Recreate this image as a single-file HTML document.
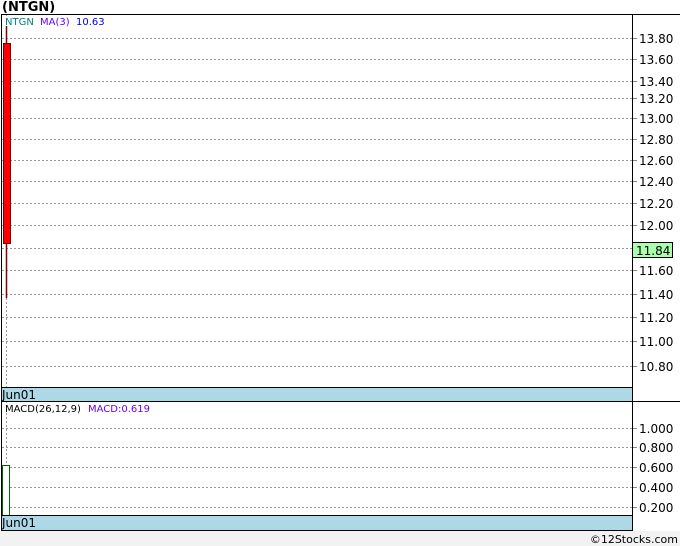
<!DOCTYPE html>
<html><head><meta charset="utf-8"><style>
body{margin:0;width:680px;height:546px;background:#f2f2f2;overflow:hidden}
svg{display:block}
text{font-family:"DejaVu Sans","Liberation Sans",sans-serif}
</style></head><body>
<svg width="680" height="546" xmlns="http://www.w3.org/2000/svg">
<rect x="0" y="0" width="680" height="531" fill="#fff"/>
<rect x="0" y="0" width="680" height="14" fill="#fff"/>
<text x="2" y="11" font-size="13" font-weight="bold" fill="#000">(NTGN)</text>
<g stroke="#999" stroke-dasharray="2,2" stroke-width="1">
<line x1="2" x2="632" y1="38.5" y2="38.5"/><line x1="2" x2="632" y1="59.5" y2="59.5"/><line x1="2" x2="632" y1="81.5" y2="81.5"/><line x1="2" x2="632" y1="98.5" y2="98.5"/><line x1="2" x2="632" y1="118.5" y2="118.5"/><line x1="2" x2="632" y1="139.5" y2="139.5"/><line x1="2" x2="632" y1="160.5" y2="160.5"/><line x1="2" x2="632" y1="181.5" y2="181.5"/><line x1="2" x2="632" y1="203.5" y2="203.5"/><line x1="2" x2="632" y1="225.5" y2="225.5"/><line x1="2" x2="632" y1="248.5" y2="248.5"/><line x1="2" x2="632" y1="270.5" y2="270.5"/><line x1="2" x2="632" y1="294.5" y2="294.5"/><line x1="2" x2="632" y1="317.5" y2="317.5"/><line x1="2" x2="632" y1="341.5" y2="341.5"/><line x1="2" x2="632" y1="366.5" y2="366.5"/>
<line x1="2" x2="632" y1="428.5" y2="428.5"/><line x1="2" x2="632" y1="447.5" y2="447.5"/><line x1="2" x2="632" y1="467.5" y2="467.5"/><line x1="2" x2="632" y1="487.5" y2="487.5"/><line x1="2" x2="632" y1="507.5" y2="507.5"/>
<line x1="6.5" x2="6.5" y1="14" y2="387"/><line x1="6.5" x2="6.5" y1="401" y2="515"/>
</g>
<g stroke="#888"><line x1="632" x2="637" y1="38.5" y2="38.5"/><line x1="632" x2="637" y1="59.5" y2="59.5"/><line x1="632" x2="637" y1="81.5" y2="81.5"/><line x1="632" x2="637" y1="98.5" y2="98.5"/><line x1="632" x2="637" y1="118.5" y2="118.5"/><line x1="632" x2="637" y1="139.5" y2="139.5"/><line x1="632" x2="637" y1="160.5" y2="160.5"/><line x1="632" x2="637" y1="181.5" y2="181.5"/><line x1="632" x2="637" y1="203.5" y2="203.5"/><line x1="632" x2="637" y1="225.5" y2="225.5"/><line x1="632" x2="637" y1="270.5" y2="270.5"/><line x1="632" x2="637" y1="294.5" y2="294.5"/><line x1="632" x2="637" y1="317.5" y2="317.5"/><line x1="632" x2="637" y1="341.5" y2="341.5"/><line x1="632" x2="637" y1="366.5" y2="366.5"/><line x1="632" x2="637" y1="428.5" y2="428.5"/><line x1="632" x2="637" y1="447.5" y2="447.5"/><line x1="632" x2="637" y1="467.5" y2="467.5"/><line x1="632" x2="637" y1="487.5" y2="487.5"/><line x1="632" x2="637" y1="507.5" y2="507.5"/></g>
<g font-size="12" fill="#000">
<text x="639" y="43">13.80</text><text x="639" y="64">13.60</text><text x="639" y="86">13.40</text><text x="639" y="103">13.20</text><text x="639" y="123">13.00</text><text x="639" y="144">12.80</text><text x="639" y="165">12.60</text><text x="639" y="186">12.40</text><text x="639" y="208">12.20</text><text x="639" y="230">12.00</text><text x="639" y="275">11.60</text><text x="639" y="299">11.40</text><text x="639" y="322">11.20</text><text x="639" y="346">11.00</text><text x="639" y="371">10.80</text>
<text x="639" y="433">1.000</text><text x="639" y="452">0.800</text><text x="639" y="472">0.600</text><text x="639" y="492">0.400</text><text x="639" y="512">0.200</text>
</g>
<rect x="632.5" y="242.5" width="40" height="15" fill="#aaffaa" stroke="#000"/>
<text x="636" y="255" font-size="12">11.84</text>
<line x1="6.5" x2="6.5" y1="26" y2="298" stroke="#800000" stroke-width="1.5"/>
<rect x="3.5" y="43.5" width="7" height="200" fill="#ff0000" stroke="#800000"/>
<rect x="2.5" y="465.5" width="7" height="50" fill="#fff" stroke="#006400"/>
<text x="5" y="25" font-size="10" fill="#008080">NTGN</text>
<text x="40" y="25" font-size="10" fill="#6600ff">MA(3)</text>
<text x="76" y="25" font-size="10" fill="#0000dd">10.63</text>
<text x="5" y="412" font-size="10" fill="#000">MACD(26,12,9)</text>
<text x="88" y="412" font-size="10" fill="#6600ff">MACD:0.619</text>
<rect x="1" y="387" width="631" height="14" fill="#add8e6"/>
<rect x="1" y="515" width="631" height="15" fill="#add8e6"/>
<text x="2" y="399" font-size="12">Jun01</text>
<text x="2" y="527" font-size="12">Jun01</text>
<g stroke="#000" fill="none">
<line x1="1" x2="680" y1="14.5" y2="14.5"/>
<line x1="1.5" x2="1.5" y1="14" y2="531"/>
<line x1="632.5" x2="632.5" y1="14" y2="531"/>
<line x1="1" x2="632" y1="387.5" y2="387.5"/>
<line x1="1" x2="680" y1="401.5" y2="401.5"/>
<line x1="1" x2="632" y1="515.5" y2="515.5"/>
<line x1="1" x2="632" y1="530.5" y2="530.5"/>
</g>
<text x="678" y="543" font-size="11" text-anchor="end" fill="#000">©12Stocks.com</text>
</svg>
</body></html>
